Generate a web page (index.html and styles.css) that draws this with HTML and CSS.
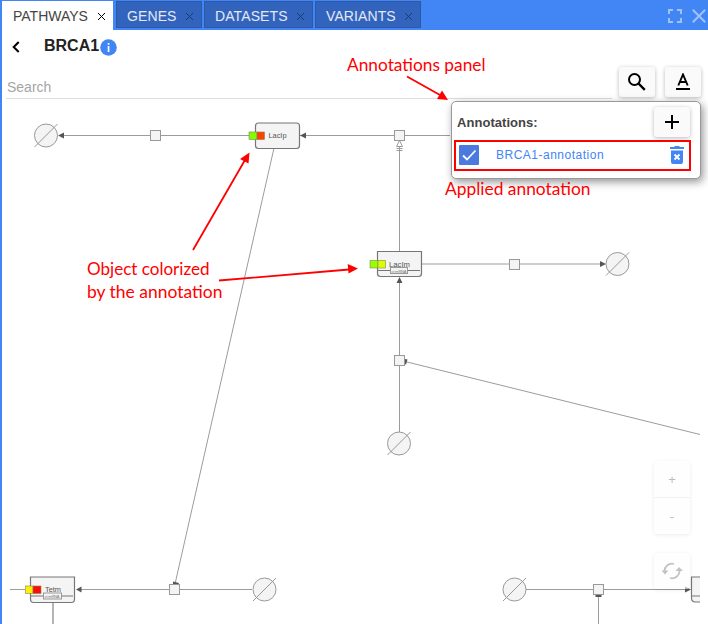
FILE: index.html
```html
<!DOCTYPE html>
<html lang="en">
<head>
<meta charset="utf-8">
<title>Pathways</title>
<link rel="stylesheet" href="styles.css">
</head>
<body>
<div class="window">
  <header class="tabbar">
    <nav class="tabs">
      <div class="tab tab-pathways active"><span>PATHWAYS</span><svg class="close" viewBox="0 0 9 9"><path d="M1 1l7 7M8 1L1 8"/></svg></div>
      <div class="tab tab-genes"><span>GENES</span><svg class="close" viewBox="0 0 9 9"><path d="M1 1l7 7M8 1L1 8"/></svg></div>
      <div class="tab tab-datasets"><span>DATASETS</span><svg class="close" viewBox="0 0 9 9"><path d="M1 1l7 7M8 1L1 8"/></svg></div>
      <div class="tab tab-variants"><span>VARIANTS</span><svg class="close" viewBox="0 0 9 9"><path d="M1 1l7 7M8 1L1 8"/></svg></div>
    </nav>
    <div class="window-actions">
      <svg width="14" height="14" viewBox="0 0 14 14"><path d="M1 5V1h4M9 1h4v4M13 9v4H9M5 13H1V9"/></svg>
      <svg width="14" height="14" viewBox="0 0 14 14"><path d="M.8 .8l12.400 12.400M13.200 .8L.8 13.200"/></svg>
    </div>
  </header>
  <div class="titlebar">
    <svg class="back" width="8" height="12" viewBox="0 0 8 12"><path d="M6.700 1L1.700 6l5 5"/></svg>
    <h1>BRCA1</h1>
    <svg class="info" width="17" height="17" viewBox="0 0 17 17"><circle cx="8.500" cy="8.500" r="8.300"/><path d="M7.700 4h1.700v1.700H7.700zM7.700 7h1.700v6H7.700z"/></svg>
  </div>
  <div class="toolbar">
    <div class="search">Search</div>
    <div class="button"><svg width="20" height="20" viewBox="0 0 20 20"><circle cx="7.500" cy="7.500" r="5.500" fill="none" stroke="#000" stroke-width="2"/><path d="M11.500 11.500l6.300 6.300" stroke="#000" stroke-width="2.400"/></svg></div>
    <div class="button"><svg width="16" height="18" viewBox="0 0 16 18"><path d="M3.300 12.500L8 1.500l4.700 11M5 9h6" fill="none" stroke="#000" stroke-width="1.900"/><path d="M1 15h14v2H1z"/></svg></div>
  </div>
  <main class="canvas">
    <svg class="diagram" width="698" height="524" viewBox="2 100 698 524">
      <defs>
        <g id="sink"><circle r="11.500"/><path d="M-11.500 11.500L11.500-11.500"/></g>
        <rect id="process" x="-5" y="-5" width="10" height="10"/>
      </defs>
      <g class="edges">
        <path d="M62 135.500H450M422 264H603M399.500 153V251M399.500 280V432M405 361.500L700 434.500M274 148L175 584M10 589.500H25M79 589.500H252M526 589.500H687M598.500 595V624"/>
        <path class="thick" d="M53 603V624"/>
        <path d="M399.500 140.500l-3 6h6zM396.500 148.500h6M396.500 150.500h6M399.500 147v6" fill="#fff"/>
      </g>
      <g class="arrows">
        <path d="M58 135.500l6-3v6zM300 135.500l6-3v6zM606 264l-6-3v6zM399.500 277l-3 6h6zM76 589.500l5.500-3v6zM691 589.500l-6-3v6zM404 364l1-5 2.500 .5-1.500 5zM173 581.500l6 1.500-1 2h-5zM595.500 595h6v2h-6z"/>
      </g>
      <g class="nodes">
        <use href="#sink" x="46" y="135.500"/><use href="#sink" x="617.500" y="264"/>
        <use href="#sink" x="399" y="443.500"/><use href="#sink" x="264.500" y="589.500"/><use href="#sink" x="514.500" y="589.500"/>
        <use href="#process" x="155.500" y="135.500"/><use href="#process" x="399.500" y="135.500"/>
        <use href="#process" x="514.500" y="264.500"/><use href="#process" x="399.500" y="360.500"/>
        <use href="#process" x="174.500" y="589.500"/><use href="#process" x="598.500" y="589.500"/>
        <rect class="entity" x="255.500" y="123" width="44" height="25.500" rx="3"/>
        <path class="entity" d="M377.500 251.500h44v22q0 3-3 3h-38q-3 0-3-3zM378 270.500h42"/>
        <path class="entity" d="M30.500 577h44v22q0 3.500-3 3.500h-38q-3 0-3-3.500zM31 596h42"/>
        <path class="entity" d="M701 577h-9.500v21q0 4 4 4h5.500M692 596h9"/>
        <rect x="390.500" y="267.500" width="17" height="6"/><rect x="43.500" y="593" width="18" height="6"/>
      </g>
      <g class="labels">
        <text x="268.500" y="138" textLength="18" lengthAdjust="spacingAndGlyphs">LacIp</text>
        <text x="389" y="267" textLength="21" lengthAdjust="spacingAndGlyphs">LacIm</text>
        <text x="45" y="592" textLength="16" lengthAdjust="spacingAndGlyphs">Tetm</text>
        <text class="tiny" x="391.500" y="272.500" textLength="15">ct:mRNA</text>
        <text class="tiny" x="44.500" y="598" textLength="15">ct:mRNA</text>
      </g>
      <g class="markers">
        <rect x="249" y="132" width="8" height="7.500" fill="#80ff00"/><rect x="257" y="132" width="7.500" height="7.500" fill="#ff4000"/>
        <rect x="370" y="260.500" width="8" height="7.500" fill="#99ff00"/><rect x="378" y="260.500" width="7.500" height="7.500" fill="#d9ff00"/>
        <rect x="25.500" y="586" width="7.500" height="7.500" fill="#fff000"/><rect x="33" y="586" width="8" height="7.500" fill="#ff0a0a"/>
      </g>
    </svg>
    <div class="zoom-controls">
      <div class="zoom-group"><div>+</div><div>-</div></div>
      <div class="reload"><svg width="22" height="18" viewBox="0 0 22 18"><path d="M3.500 10a7.500 7.500 0 0 1 9.500-8M18.500 8a7.500 7.500 0 0 1-9.500 8" fill="none" stroke="#c2c2c2" stroke-width="1.800"/><path d="M.5 8.500h7L4 12.500zM14.500 9l3.500-4 4 4z" fill="#c2c2c2"/></svg></div>
    </div>
  </main>
  <section class="annotations">
    <div class="annotations-head"><strong>Annotations:</strong><div class="button"><svg width="16" height="16" viewBox="0 0 16 16"><path d="M8 1v14M1 8h14" stroke="#000" stroke-width="2"/></svg></div></div>
    <div class="annotation-row">
      <svg class="check" width="20" height="20" viewBox="0 0 20 20"><rect width="20" height="20" rx="1" fill="#4a7ade"/><path d="M4 10.500l4 4 8.500-9" fill="none" stroke="#fff" stroke-width="1.800"/></svg>
      <span>BRCA1-annotation</span>
      <svg class="trash" width="14" height="18" viewBox="0 0 14 18"><path d="M0 1h4l1-1h4l1 1h4v2H0zM1 4.500h12V16q0 2-2 2H3q-2 0-2-2z" fill="#4285f4"/><path d="M4.500 8.500l5 5M9.500 8.500l-5 5" stroke="#fff" stroke-width="1.800"/></svg>
    </div>
  </section>
  <svg class="callouts" width="708" height="624" viewBox="0 0 708 624">
    <path d="M407 76.500L440 95M193 250L245 160M219 280.500L349 269.500"/>
    <g class="heads"><path d="M448 100l-11-1 5-8.500zM249.500 152.500l-1 11-8.500-4.500zM358 268.500l-9.500 5-.8-9.500z"/></g>
    <text x="347" y="71" textLength="138.500" lengthAdjust="spacingAndGlyphs">Annotations panel</text>
    <text x="445" y="195" textLength="145.500" lengthAdjust="spacingAndGlyphs">Applied annotation</text>
    <text x="87" y="275" textLength="122.500" lengthAdjust="spacingAndGlyphs">Object colorized</text>
    <text x="87" y="298" textLength="135.500" lengthAdjust="spacingAndGlyphs">by the annotation</text>
  </svg>
</div>
</body>
</html>
```
FILE: styles.css
```css
* { box-sizing: border-box; }
body { margin: 0; background: #fff; font-family: "Liberation Sans", Arial, sans-serif; }
svg { display: block; flex: none; }
.window { position: relative; width: 708px; height: 624px; overflow: hidden; border-left: 2px solid #4285f4; display: flex; flex-direction: column; }
.tabbar { height: 30px; flex: none; background: #4285f4; display: flex; justify-content: space-between; padding-top: 1px; }
.tabs { display: flex; align-items: flex-start; gap: 2px; }
.tab { height: 27px; display: flex; align-items: center; justify-content: space-between; padding: 3px 7px 0 10px; background: #3364bd; border: 1px solid #2c58aa; color: #e3e9f5; font-size: 14px; letter-spacing: .1px; }
.tab.active { height: 29px; padding: 1px 7px 0 11px; background: #fff; border: 0; color: #444; margin-right: 1px; letter-spacing: 0; }
.tab-pathways { width: 111px; }
.tab-genes { width: 86px; }
.tab-datasets { width: 109px; }
.tab-variants { width: 106px; }
.close { width: 9px; height: 9px; fill: none; stroke: #1d3b70; stroke-width: 1; }
.active .close { stroke: #000; }
.window-actions { display: flex; align-items: center; gap: 10px; padding-right: 2px; }
.window-actions svg { fill: none; stroke: #a0c2fa; stroke-width: 2; }
.titlebar { height: 34px; flex: none; display: flex; align-items: center; padding-left: 10px; }
.back { fill: none; stroke: #000; stroke-width: 2; }
h1 { margin: 0 1px 2px 24px; font-size: 16px; line-height: 20px; color: #222; }
.info { fill: #fff; }
.info circle { fill: #4285f4; }
.toolbar { height: 35px; flex: none; display: flex; gap: 10px; padding: 3px 7px 0 4px; }
.search { flex: none; width: 606px; height: 32px; margin-right: -3px; border-bottom: 1px solid #ddd; font-size: 14px; line-height: 41px; color: #a5a5a5; padding-left: 1px; }
.button { flex: none; width: 36px; height: 30px; display: flex; align-items: center; justify-content: center; border-radius: 3px; background: #fafafa; box-shadow: 0 1px 4px rgba(0,0,0,.28); }
.canvas { flex: 1; position: relative; margin-top: 1px; }
.diagram text { font-family: "Liberation Sans", Arial, sans-serif; font-size: 7.500px; fill: #555; }
.diagram .tiny { font-size: 4px; fill: #777; }
.edges { fill: none; stroke: #9c9c9c; stroke-width: 1; }
.edges .thick { stroke-width: 1.500; }
.arrows { fill: #555; }
.nodes { fill: #f4f4f4; stroke: #999; stroke-width: 1; }
.entity { stroke: #777; stroke-width: 1.200; }
.markers { stroke: #868654; stroke-width: .6; }
.zoom-controls { position: absolute; left: 652px; top: 361px; width: 36px; display: flex; flex-direction: column; gap: 19px; color: #bbb; font-size: 13px; }
.zoom-group, .reload { border-radius: 3px; background: rgba(253,253,253,.6); box-shadow: 0 1px 4px rgba(0,0,0,.08); }
.zoom-group div { height: 36px; display: flex; align-items: center; justify-content: center; }
.zoom-group div + div { height: 37px; border-top: 1px solid #f0f0f0; }
.reload { height: 36px; width: 36px; display: flex; align-items: center; justify-content: center; }
.annotations { position: absolute; left: 449px; top: 101px; width: 250px; height: 78px; background: #fff; border: 1px solid #999; border-radius: 5px; box-shadow: 2px 3px 9px rgba(0,0,0,.42); }
.annotations-head { display: flex; justify-content: space-between; align-items: center; height: 38px; padding: 2px 10px 0 5px; font-size: 13px; color: #444; letter-spacing: .05px; }
.annotation-row { display: flex; align-items: center; height: 31px; width: 237px; margin-left: 2px; border: 2px solid #f00; padding: 0 5px 2px 3px; color: #4285f4; font-size: 12px; }
.annotation-row span { margin-left: 17px; flex: 1; letter-spacing: .5px; }
.callouts { position: absolute; left: -2px; top: 0; fill: none; stroke: #f00; stroke-width: 1.800; }
.callouts text { font: 18px Lato, "Open Sans", sans-serif; fill: #f00; stroke: none; }
.heads { fill: #f00; stroke: none; }
```
